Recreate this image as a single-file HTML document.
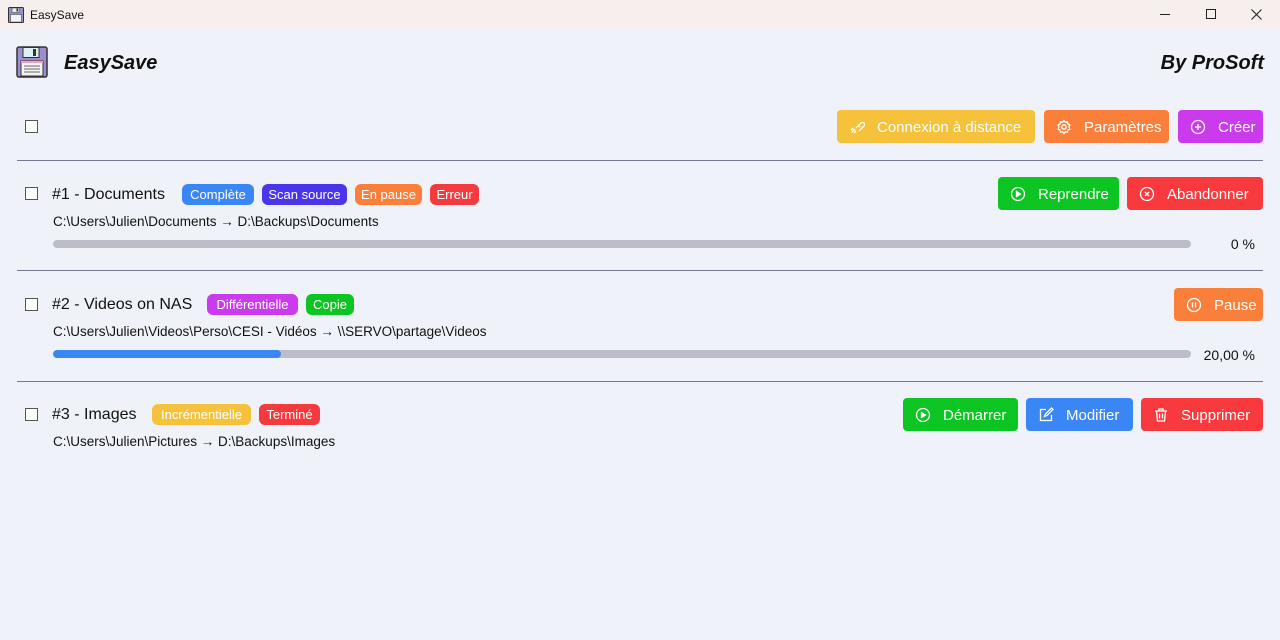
<!DOCTYPE html>
<html><head><meta charset="utf-8"><style>
*{box-sizing:border-box;margin:0;padding:0}
body{width:1280px;height:640px;background:#eff2f9;font-family:"Liberation Sans",sans-serif;color:#111;position:relative;overflow:hidden}
.abs{position:absolute}
.tb{left:0;top:0;width:1280px;height:30px;background:#f7efee}
.btn{position:absolute;height:33px;border-radius:4px;color:#fff;font-size:15px;display:flex;align-items:center;padding-left:12px;padding-top:1px;gap:12px;white-space:nowrap}
.btn svg{width:16px;height:16px;flex:none}
.badge{position:absolute;height:21px;border-radius:6px;color:#fff;font-size:13px;display:flex;align-items:center;justify-content:center;white-space:nowrap}
.cb{position:absolute;width:13px;height:13px;border:1px solid #555;background:#fff}
.sep{position:absolute;left:17px;width:1246px;height:1px;background:#7a7590}
.name{position:absolute;font-size:16px}
.path{position:absolute;font-size:13.5px}
.bar{position:absolute;left:53px;width:1138px;height:8px;border-radius:4px;background:#bdbdc9;overflow:hidden}
.pct{position:absolute;right:25px;font-size:14px}
</style></head><body>
<div class="abs tb"></div>
<svg class="abs" style="left:8px;top:7px" width="16" height="16" viewBox="0 0 32 32"><rect x="1" y="1" width="30" height="30" rx="2" fill="#9b8fcf" stroke="#333" stroke-width="2"/><rect x="8" y="2" width="14" height="9" fill="#dff0f5" stroke="#333"/><rect x="17" y="3" width="3" height="6" fill="#333"/><rect x="5" y="15" width="22" height="15" fill="#f4f4f4" stroke="#333"/></svg>
<div class="abs" style="left:30px;top:8px;font-size:12px">EasySave</div>
<div class="abs" style="left:1160px;top:14px;width:10px;height:1px;background:#222"></div>
<div class="abs" style="left:1206px;top:9px;width:10px;height:10px;border:1px solid #222"></div>
<svg class="abs" style="left:1251px;top:9px" width="11" height="11" viewBox="0 0 11 11"><path d="M0.5 0.5l10 10M10.5 0.5l-10 10" stroke="#222" stroke-width="1.1"/></svg>

<svg class="abs" style="left:16px;top:46px" width="32" height="32" viewBox="0 0 32 32"><rect x="1" y="1" width="30" height="30" rx="2" fill="#9b8fcf" stroke="#333" stroke-width="1.5"/><rect x="7" y="1.5" width="16" height="10" fill="#dff0f5" stroke="#333"/><rect x="17" y="3" width="3" height="7" fill="#333"/><rect x="5" y="15" width="22" height="15" fill="#f4f4f4" stroke="#333"/><rect x="5" y="15" width="22" height="2" fill="#f0a0b8"/><path d="M8 20h16M8 23h16M8 26h16" stroke="#666"/></svg>
<div class="abs" style="left:64px;top:52px;font-size:20px;font-weight:bold;font-style:italic">EasySave</div>
<div class="abs" style="right:16px;top:52px;font-size:20px;font-weight:bold;font-style:italic">By ProSoft</div>

<div class="cb" style="left:25px;top:120px"></div>
<div class="btn" style="left:837px;top:110px;width:198px;background:#f7c23b"><svg viewBox="0 0 16 16" fill="none" stroke="#fff" stroke-width="1.3"><path d="M3 13l3-3M5 14l2-2M2 11l2-2M7 9l5-5a2 2 0 013 3l-5 5M9 6l2 2"/></svg>Connexion à distance</div>
<div class="btn" style="left:1044px;top:110px;width:125px;background:#fa7f3b"><svg viewBox="0 0 16 16" fill="none" stroke="#fff" stroke-width="1.3"><circle cx="8" cy="8" r="2.2"/><path d="M8 1.5l1.3 1.8 2.2-.5.4 2.2 2 1-1 2 1 2-2 1-.4 2.2-2.2-.5L8 14.5l-1.3-1.8-2.2.5-.4-2.2-2-1 1-2-1-2 2-1 .4-2.2 2.2.5z"/></svg>Paramètres</div>
<div class="btn" style="left:1178px;top:110px;width:85px;background:#cc3aed"><svg viewBox="0 0 16 16" fill="none" stroke="#fff" stroke-width="1.3"><circle cx="8" cy="8" r="6.5"/><path d="M8 5v6M5 8h6"/></svg>Créer</div>
<div class="sep" style="top:160px"></div>

<div class="cb" style="left:25px;top:187px"></div>
<div class="name" style="left:52px;top:186px">#1 - Documents</div>
<div class="badge" style="left:182px;top:184px;width:72px;background:#3b86f5">Complète</div>
<div class="badge" style="left:262px;top:184px;width:85px;background:#4a35ea">Scan source</div>
<div class="badge" style="left:355px;top:184px;width:67px;background:#fa7f3b">En pause</div>
<div class="badge" style="left:430px;top:184px;width:49px;background:#f33a3e">Erreur</div>
<div class="path" style="left:53px;top:214px">C:\Users\Julien\Documents → D:\Backups\Documents</div>
<div class="bar" style="top:240px"></div>
<div class="pct" style="top:236px">0 %</div>
<div class="btn" style="left:998px;top:177px;width:121px;background:#0cc522"><svg viewBox="0 0 16 16" fill="none" stroke="#fff" stroke-width="1.3"><circle cx="8" cy="8" r="6.5"/><path d="M6.5 5.5v5l4-2.5z" fill="#fff"/></svg>Reprendre</div>
<div class="btn" style="left:1127px;top:177px;width:136px;background:#f8393e"><svg viewBox="0 0 16 16" fill="none" stroke="#fff" stroke-width="1.3"><circle cx="8" cy="8" r="6.5"/><path d="M6 6l4 4M10 6l-4 4"/></svg>Abandonner</div>
<div class="sep" style="top:270px"></div>

<div class="cb" style="left:25px;top:298px"></div>
<div class="name" style="left:52px;top:296px">#2 - Videos on NAS</div>
<div class="badge" style="left:207px;top:294px;width:91px;background:#cc3aed">Différentielle</div>
<div class="badge" style="left:306px;top:294px;width:48px;background:#0cc522">Copie</div>
<div class="path" style="left:53px;top:324px">C:\Users\Julien\Videos\Perso\CESI - Vidéos → \\SERVO\partage\Videos</div>
<div class="bar" style="top:350px"><div style="width:228px;height:8px;background:#3b86f5;border-radius:4px"></div></div>
<div class="pct" style="top:347px">20,00 %</div>
<div class="btn" style="left:1174px;top:288px;width:89px;background:#fa7f3b"><svg viewBox="0 0 16 16" fill="none" stroke="#fff" stroke-width="1.3"><circle cx="8" cy="8" r="6.5"/><path d="M6.5 5.5v5M9.5 5.5v5"/></svg>Pause</div>
<div class="sep" style="top:381px"></div>

<div class="cb" style="left:25px;top:408px"></div>
<div class="name" style="left:52px;top:406px">#3 - Images</div>
<div class="badge" style="left:152px;top:404px;width:99px;background:#f7c23b">Incrémentielle</div>
<div class="badge" style="left:259px;top:404px;width:61px;background:#f33a3e">Terminé</div>
<div class="path" style="left:53px;top:434px">C:\Users\Julien\Pictures → D:\Backups\Images</div>
<div class="btn" style="left:903px;top:398px;width:115px;background:#0cc522"><svg viewBox="0 0 16 16" fill="none" stroke="#fff" stroke-width="1.3"><circle cx="8" cy="8" r="6.5"/><path d="M6.5 5.5v5l4-2.5z" fill="#fff"/></svg>Démarrer</div>
<div class="btn" style="left:1026px;top:398px;width:107px;background:#3b86f5"><svg viewBox="0 0 16 16" fill="none" stroke="#fff" stroke-width="1.3"><path d="M8 2.5H2.5v11h11V8"/><path d="M6.5 9.5l1-2.5 6-6 1.5 1.5-6 6z"/></svg>Modifier</div>
<div class="btn" style="left:1141px;top:398px;width:122px;background:#f8393e"><svg viewBox="0 0 16 16" fill="none" stroke="#fff" stroke-width="1.3"><path d="M2 4h12M6 4V2h4v2M3.5 4l1 10h7l1-10M6.5 6.5v5M9.5 6.5v5"/></svg>Supprimer</div>
</body></html>
